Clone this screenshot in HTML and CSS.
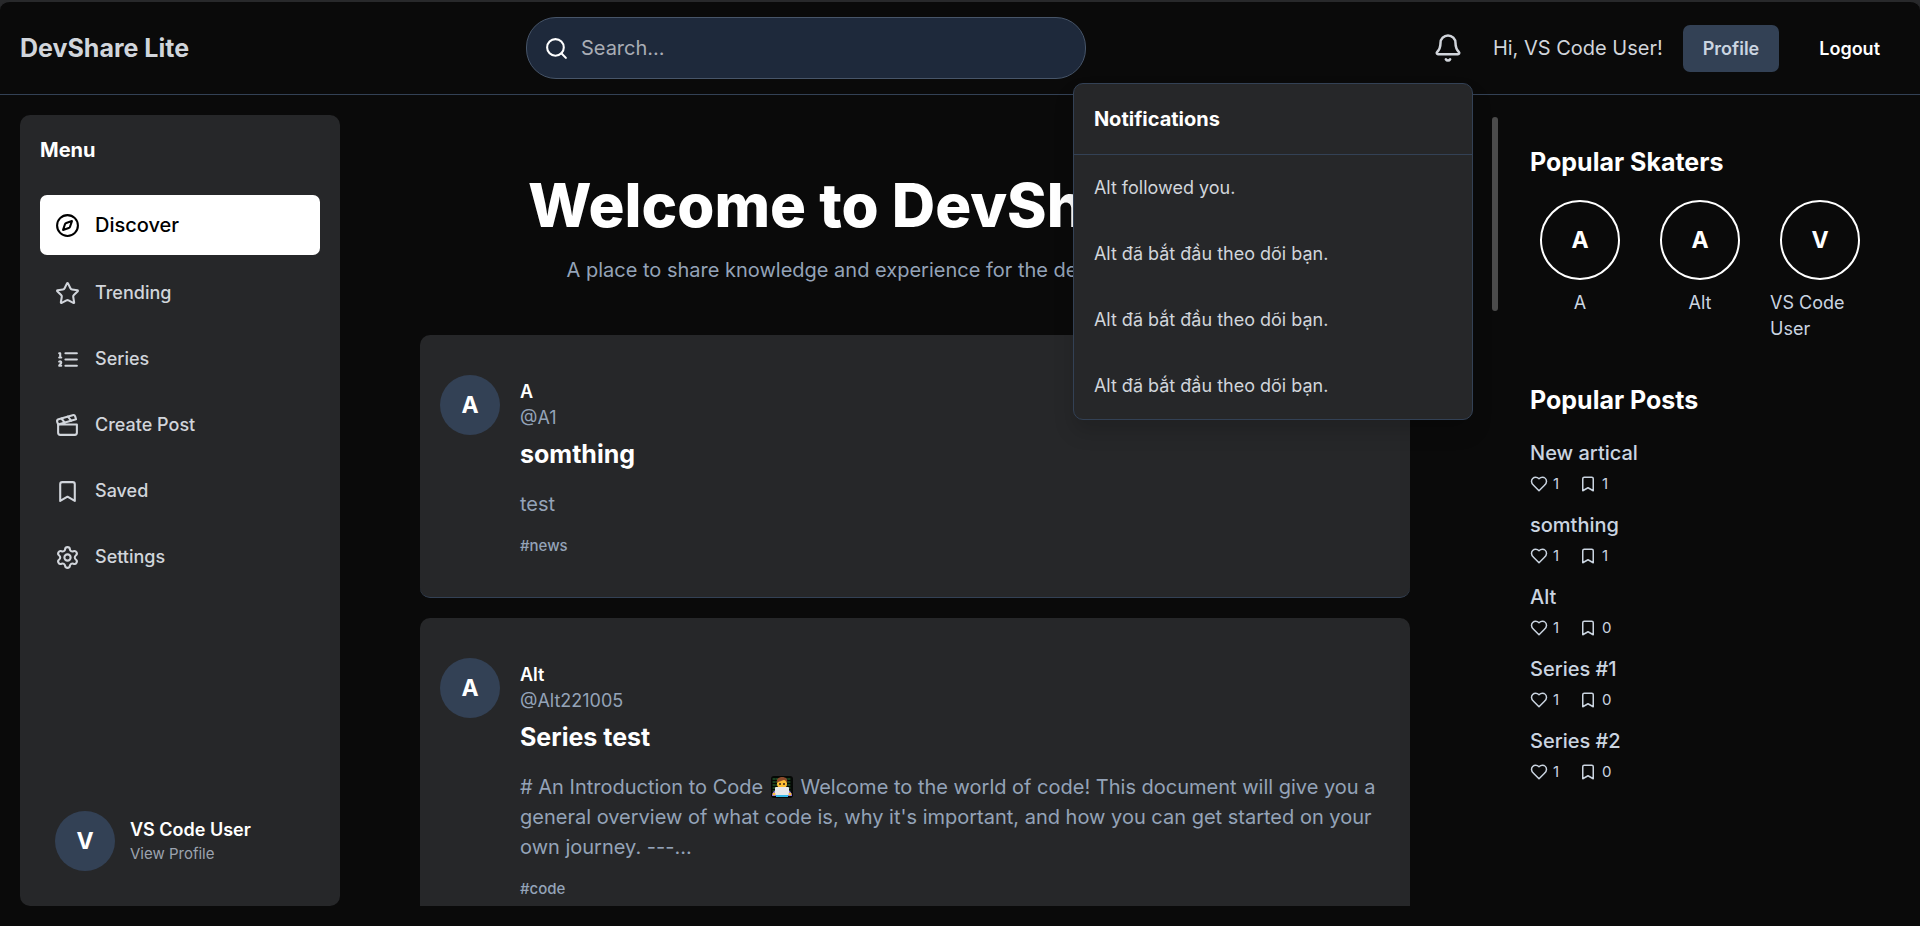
FILE: index.html
```html
<!DOCTYPE html>
<html lang="en">
<head>
<meta charset="utf-8">
<title>DevShare Lite</title>
<link rel="stylesheet" href="styles.css">
</head>
<body>
<svg class="sprite" aria-hidden="true">
  <symbol id="i-search" viewBox="0 0 24 24"><circle cx="11" cy="11" r="8"/><path d="m21 21-4.34-4.34"/></symbol>
  <symbol id="i-bell" viewBox="0 0 24 24"><path d="M10.268 21a2 2 0 0 0 3.464 0"/><path d="M3.262 15.326A1 1 0 0 0 4 17h16a1 1 0 0 0 .74-1.673C19.41 13.956 18 12.499 18 8A6 6 0 0 0 6 8c0 4.499-1.411 5.956-2.738 7.326"/></symbol>
  <symbol id="i-compass" viewBox="0 0 24 24"><circle cx="12" cy="12" r="10"/><path d="m16.24 7.76-1.804 5.411a2 2 0 0 1-1.265 1.265L7.76 16.24l1.804-5.411a2 2 0 0 1 1.265-1.265z"/></symbol>
  <symbol id="i-star" viewBox="0 0 24 24"><path d="M11.525 2.295a.53.53 0 0 1 .95 0l2.31 4.679a2.123 2.123 0 0 0 1.595 1.16l5.166.756a.53.53 0 0 1 .294.904l-3.736 3.638a2.123 2.123 0 0 0-.611 1.878l.882 5.14a.53.53 0 0 1-.771.56l-4.618-2.428a2.122 2.122 0 0 0-1.973 0L6.396 21.01a.53.53 0 0 1-.77-.56l.881-5.139a2.122 2.122 0 0 0-.611-1.879L2.16 9.795a.53.53 0 0 1 .294-.906l5.165-.755a2.122 2.122 0 0 0 1.597-1.16z"/></symbol>
  <symbol id="i-list" viewBox="0 0 24 24"><path d="M10 6h11M10 12h11M10 18h11M4 6h1v4M4 10h2M6 18H4c0-1 2-2 2-3s-1-1.500-2-1"/></symbol>
  <symbol id="i-clapper" viewBox="0 0 24 24"><path d="M20.2 6 3 11l-.9-2.400c-.3-1.100.3-2.200 1.300-2.500l13.500-4c1.100-.3 2.200.3 2.500 1.300Z"/><path d="m6.200 5.300 3.100 3.900M12.400 3.400l3.100 4M3 11h18v8a2 2 0 0 1-2 2H5a2 2 0 0 1-2-2Z"/></symbol>
  <symbol id="i-bookmark" viewBox="0 0 24 24"><path d="m19 21-7-4-7 4V5a2 2 0 0 1 2-2h10a2 2 0 0 1 2 2v16z"/></symbol>
  <symbol id="i-cog" viewBox="0 0 24 24"><path d="M9.671 4.136a2.340 2.340 0 0 1 4.659 0 2.340 2.340 0 0 0 3.319 1.915 2.340 2.340 0 0 1 2.330 4.033 2.340 2.340 0 0 0 0 3.831 2.340 2.340 0 0 1-2.330 4.033 2.340 2.340 0 0 0-3.319 1.915 2.340 2.340 0 0 1-4.659 0 2.340 2.340 0 0 0-3.320-1.915 2.340 2.340 0 0 1-2.330-4.033 2.340 2.340 0 0 0 0-3.831A2.340 2.340 0 0 1 6.350 6.051a2.340 2.340 0 0 0 3.319-1.915"/><circle cx="12" cy="12" r="3"/></symbol>
  <symbol id="i-heart" viewBox="0 0 24 24"><path d="M19 14c1.490-1.460 3-3.210 3-5.500A5.500 5.500 0 0 0 16.500 3c-1.760 0-3 .5-4.500 2-1.500-1.500-2.740-2-4.500-2A5.500 5.500 0 0 0 2 8.500c0 2.300 1.500 4.050 3 5.500l7 7Z"/></symbol>
</svg>
<div class="app">
  <header class="topbar">
    <a class="brand" href="#">DevShare Lite</a>
    <label class="search">
      <svg class="icon"><use href="#i-search"/></svg>
      <input type="search" placeholder="Search..." aria-label="Search">
    </label>
    <div class="account">
      <div class="notify">
        <button class="bell" type="button" aria-label="Notifications"><svg class="icon-bell"><use href="#i-bell"/></svg></button>
        <section class="panel">
          <h2 class="panel-title">Notifications</h2>
          <ul class="panel-list">
            <li>Alt followed you.</li>
            <li>Alt đã bắt đầu theo dõi bạn.</li>
            <li>Alt đã bắt đầu theo dõi bạn.</li>
            <li>Alt đã bắt đầu theo dõi bạn.</li>
          </ul>
        </section>
      </div>
      <span class="greeting">Hi, VS Code User!</span>
      <button class="btn btn-profile" type="button">Profile</button>
      <button class="btn" type="button">Logout</button>
    </div>
  </header>
  <div class="body">
    <aside class="sidebar">
      <h2 class="menu-title">Menu</h2>
      <nav class="menu">
        <a class="item active" href="#"><svg class="icon"><use href="#i-compass"/></svg>Discover</a>
        <a class="item" href="#"><svg class="icon"><use href="#i-star"/></svg>Trending</a>
        <a class="item" href="#"><svg class="icon"><use href="#i-list"/></svg>Series</a>
        <a class="item" href="#"><svg class="icon"><use href="#i-clapper"/></svg>Create Post</a>
        <a class="item" href="#"><svg class="icon"><use href="#i-bookmark"/></svg>Saved</a>
        <a class="item" href="#"><svg class="icon"><use href="#i-cog"/></svg>Settings</a>
      </nav>
      <a class="me" href="#">
        <span class="avatar">V</span>
        <span class="me-text"><span class="me-name">VS Code User</span><span class="me-link">View Profile</span></span>
      </a>
    </aside>
    <main class="feed">
      <div class="hero">
        <h1 class="hero-title">Welcome to DevShare Lite</h1>
        <p class="hero-sub">A place to share knowledge and experience for the developer community.</p>
      </div>
      <article class="card">
        <span class="avatar">A</span>
        <div class="post">
          <div class="author">A</div>
          <div class="handle">@A1</div>
          <h2 class="post-title">somthing</h2>
          <p class="excerpt">test</p>
          <a class="tag" href="#">#news</a>
        </div>
      </article>
      <article class="card">
        <span class="avatar">A</span>
        <div class="post">
          <div class="author">Alt</div>
          <div class="handle">@Alt221005</div>
          <h2 class="post-title">Series test</h2>
          <p class="excerpt"># An Introduction to Code <svg class="emoji" viewBox="0 0 22 22" role="img" aria-label="Technologist"><rect width="22" height="22" rx="3" fill="#050805"/><path d="M2 3h18M2 6h18M2 9h18M2 12h18M2 15h18" stroke="#2f7a3a" stroke-width="1" stroke-dasharray="2 1"/><path d="M1 20c0-4 3-7 10-7s10 3 10 7z" fill="#8a6bf0"/><path d="M5 18h12v3H5z" fill="#35b8e8"/><rect x="6" y="2" width="10" height="11" rx="5" fill="#fcbf35"/><path d="M6 7c-1-4 2-6 5-6 4 0 6 2 5 6-1-2-2-3-3-3-2 1-5 1-7 3z" fill="#8a4a2a"/><circle cx="9" cy="8" r="1" fill="#33221a"/><circle cx="13" cy="8" r="1" fill="#33221a"/><rect x="4" y="11" width="14" height="8" rx="1" fill="#e6e8ea"/><circle cx="3" cy="18" r="1.500" fill="#fcbf35"/><circle cx="19" cy="18" r="1.500" fill="#fcbf35"/></svg> Welcome to the world of code! This document will give you a general overview of what code is, why it's important, and how you can get started on your own journey. ---...</p>
          <a class="tag" href="#">#code</a>
        </div>
      </article>
    </main>
    <div class="rail"><div class="thumb"></div></div>
    <aside class="aside">
      <section>
        <h2 class="side-title">Popular Skaters</h2>
        <div class="skaters">
          <a class="skater" href="#"><span class="ring">A</span><span>A</span></a>
          <a class="skater" href="#"><span class="ring">A</span><span>Alt</span></a>
          <a class="skater" href="#"><span class="ring">V</span><span>VS Code User</span></a>
        </div>
      </section>
      <section>
        <h2 class="side-title">Popular Posts</h2>
        <ul class="posts">
          <li><a href="#">New artical</a><div class="stats"><span><svg class="icon-sm"><use href="#i-heart"/></svg>1</span><span><svg class="icon-sm"><use href="#i-bookmark"/></svg>1</span></div></li>
          <li><a href="#">somthing</a><div class="stats"><span><svg class="icon-sm"><use href="#i-heart"/></svg>1</span><span><svg class="icon-sm"><use href="#i-bookmark"/></svg>1</span></div></li>
          <li><a href="#">Alt</a><div class="stats"><span><svg class="icon-sm"><use href="#i-heart"/></svg>1</span><span><svg class="icon-sm"><use href="#i-bookmark"/></svg>0</span></div></li>
          <li><a href="#">Series #1</a><div class="stats"><span><svg class="icon-sm"><use href="#i-heart"/></svg>1</span><span><svg class="icon-sm"><use href="#i-bookmark"/></svg>0</span></div></li>
          <li><a href="#">Series #2</a><div class="stats"><span><svg class="icon-sm"><use href="#i-heart"/></svg>1</span><span><svg class="icon-sm"><use href="#i-bookmark"/></svg>0</span></div></li>
        </ul>
      </section>
    </aside>
  </div>
</div>
</body>
</html>
```
FILE: styles.css
```css
* { box-sizing: border-box; }
body { margin: 0; background: #28292b; color: #fff; font-family: Inter, "Noto Sans", sans-serif; font-size: 20px; line-height: 30px; }
h1, h2, p, ul { margin: 0; padding: 0; }
ul { list-style: none; }
a { color: inherit; text-decoration: none; }
button { font: inherit; color: inherit; background: none; border: 0; padding: 0; cursor: pointer; }
svg { fill: none; stroke: currentColor; stroke-width: 2; stroke-linecap: round; stroke-linejoin: round; flex: none; }
.sprite { display: none; }
.icon { width: 25px; height: 25px; }
.icon-bell { display: block; width: 30px; height: 30px; }
.icon-sm { width: 18px; height: 18px; }
.app { display: flex; flex-direction: column; height: 100vh; border-top: 2px solid #28292b; border-radius: 10px 10px 0 0; background: #0a0a0a; overflow: hidden; }

.topbar { display: flex; align-items: center; justify-content: space-between; padding: 15px 20px; border-bottom: 1px solid #334155; }
.brand { font-size: 25px; font-weight: 700; color: #d1d5db; }
.search { display: flex; align-items: center; gap: 12px; width: 560px; height: 62px; padding: 0 17px; border: 1px solid #475569; border-radius: 30px; background: #1e293b; }
.search input { flex: 1; min-width: 0; padding: 0; border: 0; outline: 0; background: none; color: #fff; font: inherit; }
.search input::placeholder { color: #a9adb5; opacity: 1; }
.account { display: flex; align-items: center; gap: 20px; }
.greeting, .bell { color: #d1d5db; }
.notify { position: relative; }
.bell { display: block; padding: 10px; }
.btn { padding: 10px 20px; font-size: 18px; line-height: 27px; font-weight: 600; border-radius: 7px; }
.btn-profile { background: #334155; color: #cbd5e1; }

.panel { position: absolute; z-index: 5; top: 60px; right: 0; width: 400px; border: 1px solid #334155; border-radius: 10px; background: #262729; box-shadow: 0 12px 20px rgba(0, 0, 0, .15); }
.panel-title { padding: 20px; border-bottom: 1px solid #334155; font-size: 20px; font-weight: 700; }
.panel-list li { padding: 20px; font-size: 18px; line-height: 26px; color: #d1d5db; }

.body { display: flex; flex: 1; min-height: 0; padding: 20px; }
.sidebar { display: flex; flex-direction: column; width: 320px; padding: 20px; border-radius: 10px; background: #262729; }
.menu-title { margin-bottom: 30px; font-size: 20px; font-weight: 700; }
.menu { display: flex; flex-direction: column; gap: 10px; }
.item { display: flex; align-items: center; gap: 15px; padding: 15px; border-radius: 7px; font-size: 18px; line-height: 26px; font-weight: 500; color: #d1d5db; }
.item.active { background: #fff; color: #000; font-size: 20px; line-height: 30px; }
.me { display: flex; align-items: center; gap: 15px; margin-top: auto; padding: 15px; }
.me-text { display: flex; flex-direction: column; }
.me-name { font-size: 18px; line-height: 26px; font-weight: 600; }
.me-link { font-size: 15px; line-height: 22px; color: #9ca3af; }
.avatar { display: flex; flex: none; align-items: center; justify-content: center; width: 60px; height: 60px; border-radius: 50%; background: #334155; font-size: 23px; font-weight: 700; }

.feed { display: flex; flex: 1; flex-direction: column; gap: 20px; min-width: 0; padding: 0 80px; overflow: hidden; }
.hero { display: flex; flex-direction: column; gap: 20px; padding: 60px 0 30px; text-align: center; }
.hero-title { font-size: 60px; line-height: 60px; font-weight: 800; }
.hero-sub { color: #94a3b8; }
.card { display: flex; flex: none; gap: 20px; padding: 40px 20px; border-bottom: 1px solid #334155; border-radius: 10px; background: #262729; }
.post { flex: 1; min-width: 0; padding-top: 4px; }
.author { font-size: 18px; line-height: 26px; font-weight: 600; }
.handle { font-size: 18px; line-height: 26px; color: #94a3b8; }
.post-title { margin: 6px 0 17px; font-size: 25px; line-height: 35px; font-weight: 700; }
.excerpt { margin-bottom: 15px; color: #94a3b8; }
.emoji { width: 22px; height: 22px; margin: 0 2px; vertical-align: -4px; stroke: none; }
.tag { display: block; font-size: 15px; line-height: 23px; font-weight: 500; color: #94a3b8; }

.rail { width: 10px; padding: 2px; }
.thumb { width: 6px; height: 194px; border-radius: 3px; background: #4b4b4b; }

.aside { display: flex; flex-direction: column; gap: 41px; width: 400px; padding: 30px; }
.side-title { margin-bottom: 20px; font-size: 25px; line-height: 35px; font-weight: 700; }
.skaters { display: flex; gap: 20px; }
.skater { display: flex; flex-direction: column; align-items: center; gap: 10px; width: 100px; font-size: 18px; line-height: 26px; color: #cbd5e1; }
.ring { display: flex; align-items: center; justify-content: center; width: 80px; height: 80px; border: 2px solid #fff; border-radius: 50%; color: #fff; font-size: 23px; font-weight: 700; }
.posts { display: flex; flex-direction: column; gap: 15px; }
.posts a { display: block; font-weight: 500; color: #cbd5e1; }
.stats { display: flex; gap: 20px; margin-top: 5px; font-size: 15px; line-height: 22px; color: #cbd5e1; }
.stats span { display: flex; align-items: center; gap: 5px; }
```
